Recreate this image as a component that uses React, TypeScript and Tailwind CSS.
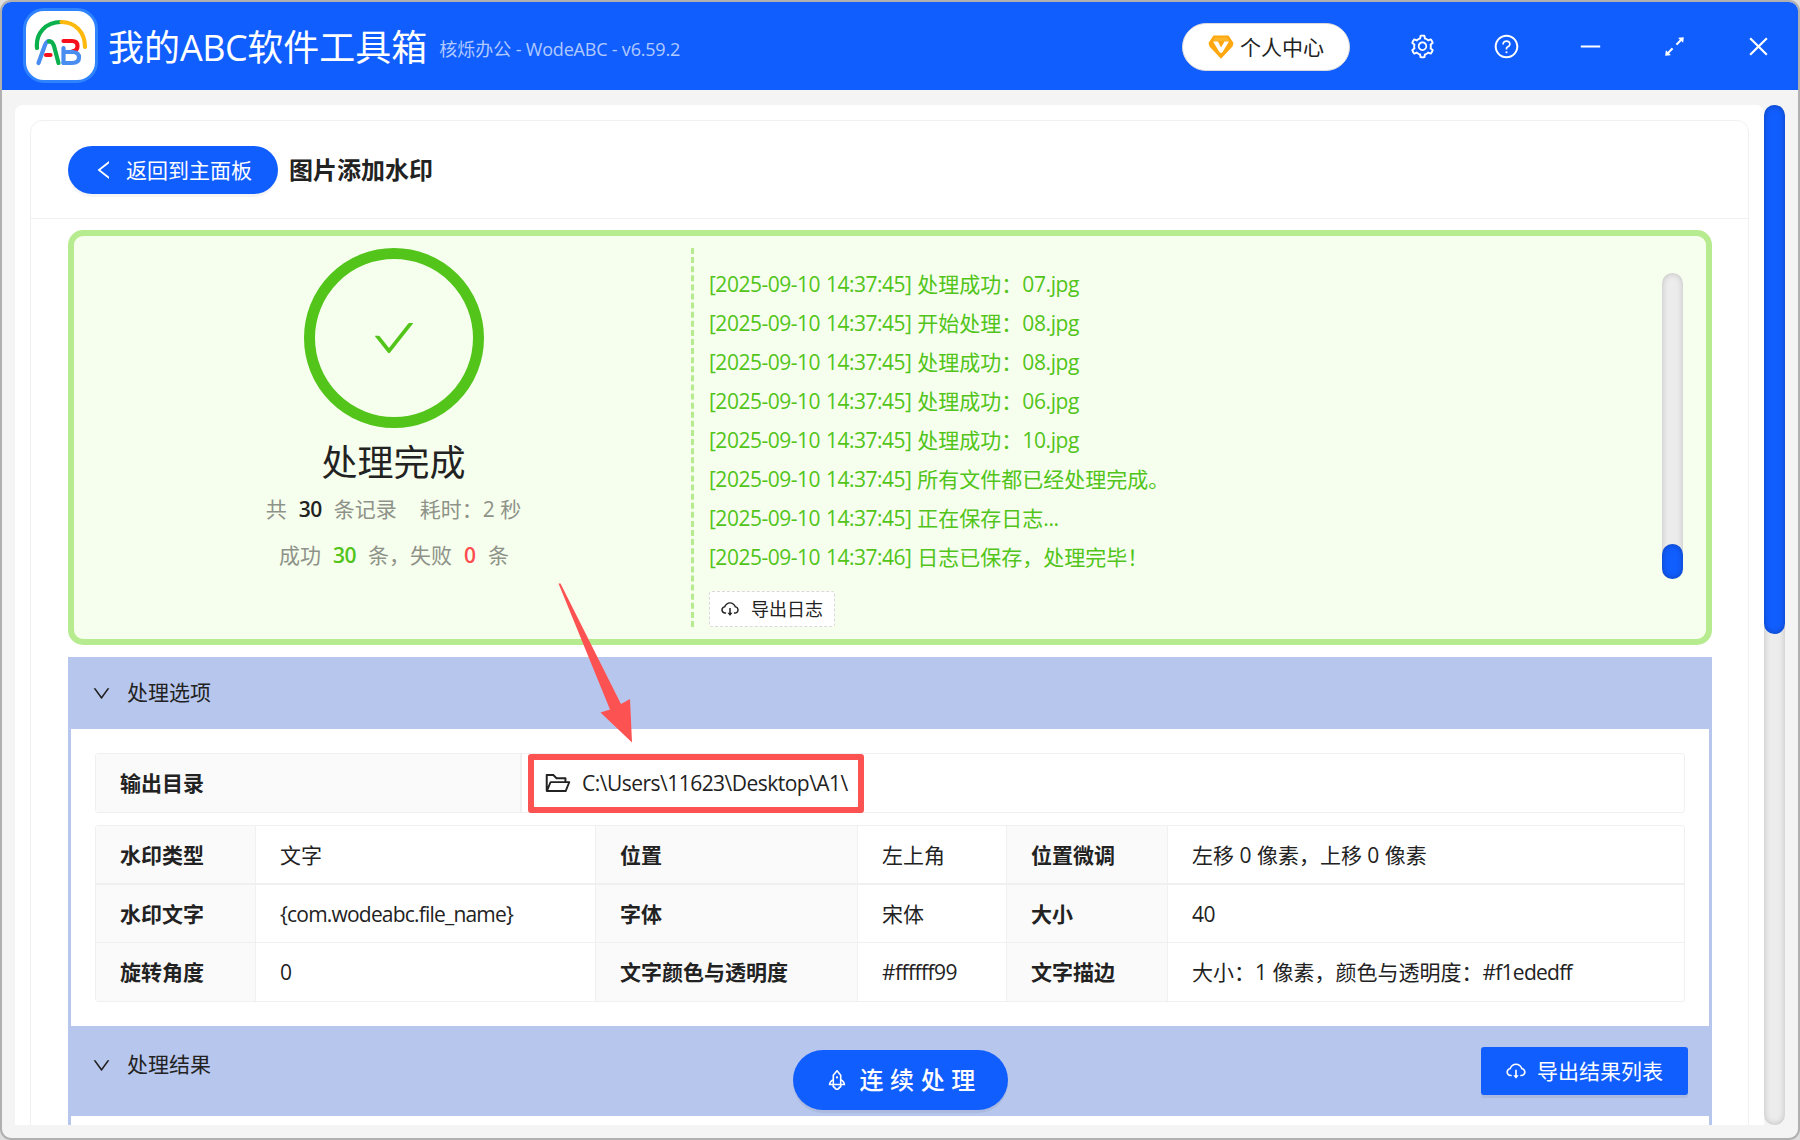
import type { ReactNode } from "react"
import {
  AiOutlineArrowsAlt,
  AiOutlineCheck,
  AiOutlineClose,
  AiOutlineCloudDownload,
  AiOutlineDown,
  AiOutlineFolderOpen,
  AiOutlineLeft,
  AiOutlineMinus,
  AiOutlineQuestionCircle,
  AiOutlineRocket,
  AiOutlineSetting,
} from "react-icons/ai"

const logs = [
  { time: "[2025-09-10 14:37:45]", text: "处理成功：", file: "07.jpg" },
  { time: "[2025-09-10 14:37:45]", text: "开始处理：", file: "08.jpg" },
  { time: "[2025-09-10 14:37:45]", text: "处理成功：", file: "08.jpg" },
  { time: "[2025-09-10 14:37:45]", text: "处理成功：", file: "06.jpg" },
  { time: "[2025-09-10 14:37:45]", text: "处理成功：", file: "10.jpg" },
  { time: "[2025-09-10 14:37:45]", text: "所有文件都已经处理完成。", file: "" },
  { time: "[2025-09-10 14:37:45]", text: "正在保存日志", file: "..." },
  { time: "[2025-09-10 14:37:46]", text: "日志已保存，处理完毕！", file: "" },
]

const Logo: React.FC = () => (
  <div className="mb-[2px] flex h-[75px] w-[75px] items-center justify-center rounded-[21px] border-3 border-[#2f83fd] bg-white">
    <svg width="54" height="54" viewBox="0 0 54 54" fill="none" strokeLinecap="round" strokeLinejoin="round">
      <path d="M3 30C1.500 15 12 4 27 4" stroke="#0ab04b" strokeWidth="4.2" />
      <path d="M27.5 4C41 4 51 14 51 29" stroke="#fdb90d" strokeWidth="4.2" />
      <path d="M4.500 45L11 27Q13 22 16 23.500" stroke="#4a8df0" strokeWidth="4.2" />
      <path d="M15 23.500Q18 22.500 20 28L24.5 45" stroke="#0ab04b" strokeWidth="4.2" />
      <path d="M12 37H16.500" stroke="#f5101c" strokeWidth="4.2" />
      <path d="M29.500 30V45" stroke="#4a8df0" strokeWidth="4.2" />
      <path d="M29.500 23H38Q43.500 23 43.500 28Q43.500 33 38 33.5" stroke="#f5101c" strokeWidth="4.2" />
      <path d="M31 34H39Q45 34.500 45 39.500Q45 45 38 45H29.500" stroke="#4a8df0" strokeWidth="4.2" />
    </svg>
  </div>
)

const Diamond: React.FC = () => (
  <svg width="26" height="24" viewBox="0 0 26 24">
    <path d="M5.5 0.5H20.5L25.5 8L24.5 11.5L13 23.8L1.5 11.5L0.5 8Z" fill="#ffa70f" />
    <path d="M7 2.5H19L21 6H5Z" fill="#ffb52a" />
    <path d="M5 6.5H10L13 12.5L16.5 6.5H21L14.6 17Q13 19 11.4 17Z" fill="#fff" />
  </svg>
)

const Header: React.FC = () => (
  <header className="flex h-[88px] items-center bg-[#115eff] pr-[26.5px] pl-[21px] text-white">
    <Logo />
    <h1 className="mt-[3px] ml-[10px] text-[36px] leading-none">
      我的<span className="tracking-[-0.5px]">ABC</span>软件工具箱
    </h1>
    <span className="mt-[6px] ml-[12px] text-[18px] leading-none text-[#b0c9ff]">
      核烁办公<span className="tracking-[-0.2px]"> - WodeABC - v6.59.2</span>
    </span>
    <div className="ml-auto flex items-center">
      <button className="mt-[2px] mr-[58.5px] flex h-12 w-[168px] items-center justify-center gap-[6px] rounded-full border border-[#d9d9d9] bg-white text-[21px] text-[#222]">
        <Diamond />
        <span className="mt-px">个人中心</span>
      </button>
      <div className="flex items-center gap-[57px] text-[27px]">
        <AiOutlineSetting />
        <AiOutlineQuestionCircle />
        <AiOutlineMinus />
        <AiOutlineArrowsAlt />
        <AiOutlineClose />
      </div>
    </div>
  </header>
)

const Result: React.FC = () => (
  <div className="mt-[11px] mr-[36px] ml-[37px] flex h-[415px] rounded-[15px] border-6 border-[#b7eb8f] bg-[#f6ffed] py-3">
    <div className="flex w-[617px] flex-col items-center pl-[23px]">
      <div className="flex flex-col items-center">
        <div className="flex h-[180px] w-[180px] items-center justify-center rounded-full border-11 border-[#52c41a] text-[48px] text-[#52c41a]">
          <AiOutlineCheck />
        </div>
        <div className="mt-[13px] mr-px text-[36px] leading-[44px] text-[#222]">处理完成</div>
        <div className="mt-px mr-px flex text-[21px] leading-[46px] whitespace-pre text-[#8e9289]">
          共<b className="mx-[12px] font-semibold tracking-[-0.6px] text-[#222]">30</b>条记录
          <span className="ml-[23px]">耗时：</span>2 秒
        </div>
        <div className="flex text-[21px] leading-[46px] text-[#8e9289]">
          成功<b className="mx-[12px] font-semibold tracking-[-0.6px] text-[#52c41a]">30</b>条，失败
          <b className="mx-[12px] font-semibold text-[#ff4d4f]">0</b>条
        </div>
      </div>
    </div>
    <div className="flex flex-1 flex-col items-start border-l-3 border-dashed border-[#b7eb8f] pl-[15px]">
      <div className="mt-[17px] flex w-full flex-1 justify-between pr-[23px]">
        <ul className="text-[21px] leading-[39px] text-[#52c41a]">
          {logs.map((log, i) => (
            <li key={i}>
              <span className="tracking-[-0.5px] [word-spacing:1px]">{log.time} </span>
              {log.text}
              <span className="tracking-[-0.4px]">{log.file}</span>
            </li>
          ))}
        </ul>
        <div className="mt-2 flex h-[306px] w-[21px] flex-col justify-end rounded-full bg-[#ececec] shadow-[inset_0_0_6px_rgba(0,0,0,0.2)]">
          <div className="h-[35px] rounded-full bg-[#115eff] shadow-[inset_0_0_6px_rgba(0,0,0,0.3)]" />
        </div>
      </div>
      <button className="flex h-9 w-[126px] items-center rounded-[3px] border border-dashed border-[#d9d9d9] bg-white pl-[10px] text-[18px] text-[#222]">
        <AiOutlineCloudDownload className="mr-[11px] text-[20px]" />
        <span className="mt-px">导出日志</span>
      </button>
    </div>
  </div>
)

const Label = ({ children }: { children: ReactNode }) => (
  <div className="flex items-center border-r border-[#f0f0f0] bg-[#fafafa] pt-px pl-6 font-bold">{children}</div>
)

const Value = ({ children }: { children: ReactNode }) => (
  <div className="flex items-center border-r border-[#f0f0f0] pt-px pl-6 whitespace-pre last:border-r-0">{children}</div>
)

const Row = ({ children }: { children: ReactNode }) => (
  <div className="grid h-[58px] grid-cols-[160px_340px_262px_149px_161px_1fr] border-b border-[#f0f0f0] first:h-[59px] first:border-b-2 last:border-b-0">
    {children}
  </div>
)

const Options: React.FC = () => (
  <div className="h-[297px] border-x-3 border-[#b7c6ed] px-6 pt-6 text-[21px] leading-none text-[#222]">
    <div className="relative flex h-[60px] rounded-[3px] border border-[#f0f0f0]">
      <div className="flex w-[426px] items-center border-r-2 border-[#f0f0f0] bg-[#fafafa] pl-6 font-bold">输出目录</div>
      <div className="flex items-center pl-[22px]">
        <AiOutlineFolderOpen className="mr-[10px] text-[28px]" />
        <span className="mt-px tracking-[-0.52px]">C:\Users\11623\Desktop\A1\</span>
      </div>
      <div className="absolute top-0 left-[432px] h-[59px] w-[336px] rounded-[3px] border-6 border-[#fd5252]" />
      <svg className="absolute top-[-171px] left-[460px]" width="80" height="162" viewBox="0 0 80 162">
        <path d="M2.5 0.5L4.5 0.5L65 121L74 116L76 159.500L44.500 129.500L54 126.500Z" fill="#fd5252" />
      </svg>
    </div>
    <div className="mt-3 flex h-[177px] flex-col rounded-[3px] border border-[#f0f0f0]">
      <Row>
        <Label>水印类型</Label>
        <Value>文字</Value>
        <Label>位置</Label>
        <Value>左上角</Value>
        <Label>位置微调</Label>
        <Value>左移 0 像素，上移 0 像素</Value>
      </Row>
      <Row>
        <Label>水印文字</Label>
        <Value>
          <span className="tracking-[-0.8px]">{"{com.wodeabc.file_name}"}</span>
        </Value>
        <Label>字体</Label>
        <Value>宋体</Value>
        <Label>大小</Label>
        <Value>
          <span className="tracking-[-0.5px]">40</span>
        </Value>
      </Row>
      <Row>
        <Label>旋转角度</Label>
        <Value>0</Value>
        <Label>文字颜色与透明度</Label>
        <Value>
          <span className="tracking-[-0.55px]">#ffffff99</span>
        </Value>
        <Label>文字描边</Label>
        <Value>
          大小：1 像素，颜色与透明度：<span className="tracking-[-0.75px]">#f1ededff</span>
        </Value>
      </Row>
    </div>
  </div>
)

const App: React.FC = () => (
  <div className="h-[1140px] w-[1800px] bg-[#dedede] font-['Open_Sans','Noto_Sans_CJK_SC',sans-serif]">
    <div className="flex h-full flex-col overflow-hidden rounded-[11px] border-2 border-[#b0b0b0] bg-[#f4f4f4]">
      <Header />
      <div className="mt-[15px] mr-[13px] ml-[13px] flex h-[1020px]">
        <main className="relative flex-1 overflow-hidden rounded-t-lg bg-white pt-[15px] pr-[15px] pl-[15px]">
          <div className="h-[1040px] rounded-xl border border-[#f0f0f0]">
            <div className="flex h-[98px] items-center border-b border-[#f0f0f0] pl-[37px]">
              <button className="mt-px flex h-12 w-[210px] items-center rounded-full bg-[#115eff] pl-[24px] text-[21px] text-white shadow-[0_3px_0_rgba(0,0,0,0.04)]">
                <AiOutlineLeft className="mr-[10px] text-[24px]" />
                <span className="mt-px">返回到主面板</span>
              </button>
              <h2 className="mt-px ml-[11px] text-[24px] font-bold text-[#222]">图片添加水印</h2>
            </div>
            <Result />
            <section className="mt-3 mr-[36px] ml-[37px]">
              <div className="flex h-[72px] items-center bg-[#b7c6ed] pl-[23px] text-[21px] text-[#222]">
                <AiOutlineDown className="mr-[15px] text-[21px]" />
                处理选项
              </div>
              <Options />
              <div className="flex h-[90px] items-start bg-[#b7c6ed] pr-6 pl-[23px] text-[21px] text-[#222]">
                <div className="flex h-[78px] items-center">
                  <AiOutlineDown className="mr-[15px] text-[21px]" />
                  处理结果
                </div>
                <button className="mt-[21px] ml-auto flex h-12 w-[207px] items-center rounded-[3px] bg-[#115eff] pl-6 text-white shadow-[0_3px_0_rgba(0,0,0,0.06)]">
                  <AiOutlineCloudDownload className="mr-[10px] text-[22px]" />
                  <span className="mt-[2px]">导出结果列表</span>
                </button>
              </div>
              <div className="h-6 border-x-3 border-[#b7c6ed]" />
            </section>
          </div>
          <button className="absolute bottom-[15px] left-[777.5px] flex h-[60px] w-[215px] items-center rounded-full bg-[#115eff] pl-[32px] text-[24px] tracking-[6.6px] text-white shadow-[0_3px_0_rgba(0,0,0,0.06)]">
            <AiOutlineRocket className="mr-[11px] text-[24px]" />
            <span className="font-medium">连续处理</span>
          </button>
        </main>
        <div className="w-[21px] rounded-full bg-[#ececec] shadow-[inset_0_0_6px_rgba(0,0,0,0.2)]">
          <div className="h-[529px] rounded-full bg-[#115eff] shadow-[inset_0_0_6px_rgba(0,0,0,0.3)]" />
        </div>
      </div>
    </div>
  </div>
)

export default App
